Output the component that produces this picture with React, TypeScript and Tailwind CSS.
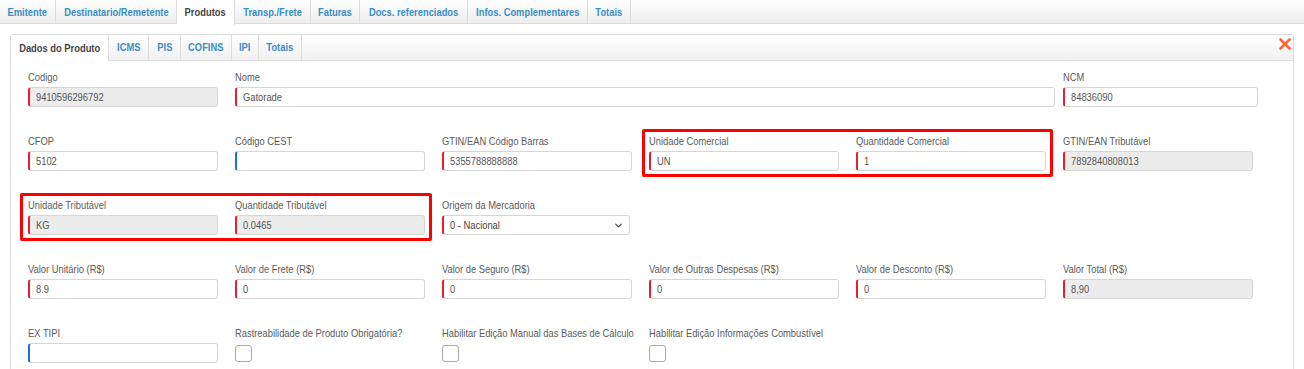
import { ChevronDown } from "lucide-react";

const font = { fontFamily: '"Liberation Sans", Arial, sans-serif' };

const topTabs = [
  { label: "Emitente", w: "w-[56px]" },
  { label: "Destinatario/Remetente", w: "w-[121px]" },
  { label: "Produtos", w: "w-[58px]", active: true },
  { label: "Transp./Frete", w: "w-[76px]" },
  { label: "Faturas", w: "w-[49px]" },
  { label: "Docs. referenciados", w: "w-[108px]" },
  { label: "Infos. Complementares", w: "w-[120px]" },
  { label: "Totais", w: "w-[43px]" },
];

const subTabs = [
  { label: "Dados do Produto", w: "w-[98px]", active: true },
  { label: "ICMS", w: "w-[40px]" },
  { label: "PIS", w: "w-[32px]" },
  { label: "COFINS", w: "w-[51px]" },
  { label: "IPI", w: "w-[27px]" },
  { label: "Totais", w: "w-[43px]" },
];

type Accent = "red" | "blue" | "none";

// o print original usa uma fonte estreita, entao comprimimos o texto
function Narrow({ children, center = false }: { children: React.ReactNode; center?: boolean }) {
  return (
    <span className={`inline-block whitespace-nowrap scale-x-[0.85] ${center ? "origin-center" : "origin-left"}`}>
      {children}
    </span>
  );
}

function Input({ value = "", gray = false, accent = "red", w = "w-[190px]" }: { value?: string; gray?: boolean; accent?: Accent; w?: string }) {
  return (
    <div
      className={`${w} h-[20px] flex items-center pl-[6px] rounded-[3px] border border-[#d6d6d6] border-l-2 text-[11px] text-[#555] ${
        gray ? "bg-[#ececec]" : "bg-white"
      } ${accent === "red" ? "border-l-[#e8202a]" : accent === "blue" ? "border-l-[#1e6fe0]" : ""}`}
    >
      <Narrow>{value}</Narrow>
    </div>
  );
}

function Field({ label, children, w = "w-[190px]" }: { label: string; children: React.ReactNode; w?: string }) {
  return (
    <div className={`${w} flex flex-col`}>
      <div className="h-[14px] leading-[14px] text-[11px] text-[#5a5a5a]">
        <Narrow>{label}</Narrow>
      </div>
      <div className="mt-[3px]">{children}</div>
    </div>
  );
}

function Checkbox() {
  return <div className="mt-[2px] w-[17px] h-[17px] rounded-[3px] border border-[#a9a9a9] bg-white" />;
}

function RedBox({ children, left = false }: { children: React.ReactNode; left?: boolean }) {
  return (
    <div
      className={`flex gap-[17px] border-[3px] border-[#ff0000] rounded-[2px] -mt-[5px] pt-[2px] -mb-[6px] pb-[3px] ${
        left ? "-ml-[8px] pl-[5px] -mr-[7px] pr-[4px]" : "-mx-[7px] px-[4px]"
      }`}
    >
      {children}
    </div>
  );
}

export default function App() {
  return (
    <div className="w-[1304px] h-[369px] overflow-hidden bg-white" style={font}>
      {/* abas principais */}
      <div className="flex h-[24px] border-b border-[#dcdcdc] bg-gradient-to-b from-white to-[#ededed]">
        {topTabs.map((t) => (
          <div
            key={t.label}
            className={`${t.w} h-[24px] flex items-center justify-center border-r border-[#dcdcdc] text-[11px] font-bold ${
              t.active ? "bg-white text-[#444] h-[25px]" : "text-[#3a8dc5]"
            }`}
          >
            <Narrow center>{t.label}</Narrow>
          </div>
        ))}
      </div>

      <div className="px-[10px] pt-[10px]">
        <div className="border border-[#dcdcdc] rounded-t-[3px] h-[400px]">
          {/* sub abas */}
          <div className="flex items-end h-[26px] border-b border-[#dcdcdc] bg-gradient-to-b from-white to-[#f0f0f0] relative">
            {subTabs.map((t) => (
              <div
                key={t.label}
                className={`${t.w} h-[25px] flex items-center justify-center border-r border-[#dcdcdc] text-[11px] font-bold ${
                  t.active ? "bg-white text-[#444] h-[26px] -mb-px" : "text-[#3a8dc5]"
                }`}
              >
                <Narrow center>{t.label}</Narrow>
              </div>
            ))}
            <svg className="absolute right-[2px] top-[3px]" width="12" height="12" viewBox="0 0 12 12">
              <path d="M1.5 1.5 L10.5 10.5 M10.5 1.5 L1.5 10.5" stroke="#ff6633" strokeWidth="2.6" strokeLinecap="round" />
            </svg>
          </div>

          <div className="pl-[17px] pt-[9px] flex flex-col gap-[27px]">
            <div className="flex">
              <Field label="Codigo">
                <Input value="9410596296792" gray />
              </Field>
              <Field label="Nome" w="w-[820px] ml-[17px]">
                <Input value="Gatorade" w="w-[820px]" />
              </Field>
              <Field label="NCM" w="w-[195px] ml-[8px]">
                <Input value="84836090" w="w-[195px]" />
              </Field>
            </div>

            <div className="flex gap-[17px]">
              <Field label="CFOP">
                <Input value="5102" />
              </Field>
              <Field label="Código CEST">
                <Input accent="blue" />
              </Field>
              <Field label="GTIN/EAN Código Barras">
                <Input value="5355788888888" />
              </Field>
              <RedBox>
                <Field label="Unidade Comercial">
                  <Input value="UN" />
                </Field>
                <Field label="Quantidade Comercial">
                  <Input value="1" />
                </Field>
              </RedBox>
              <Field label="GTIN/EAN Tributável">
                <Input value="7892840808013" gray />
              </Field>
            </div>

            <div className="flex gap-[17px]">
              <RedBox left>
                <Field label="Unidade Tributável">
                  <Input value="KG" gray />
                </Field>
                <Field label="Quantidade Tributável">
                  <Input value="0.0465" gray />
                </Field>
              </RedBox>
              <Field label="Origem da Mercadoria">
                <div className="w-[188px] h-[20px] flex items-center justify-between pl-[6px] pr-[5px] rounded-[3px] border border-[#d6d6d6] border-l-2 border-l-[#e8202a] text-[11px] text-[#444]">
                  <Narrow>0 - Nacional</Narrow>
                  <ChevronDown size={11} strokeWidth={2.5} className="text-[#444]" />
                </div>
              </Field>
            </div>

            <div className="flex gap-[17px]">
              <Field label="Valor Unitário (R$)">
                <Input value="8.9" />
              </Field>
              <Field label="Valor de Frete (R$)">
                <Input value="0" />
              </Field>
              <Field label="Valor de Seguro (R$)">
                <Input value="0" />
              </Field>
              <Field label="Valor de Outras Despesas (R$)">
                <Input value="0" />
              </Field>
              <Field label="Valor de Desconto (R$)">
                <Input value="0" />
              </Field>
              <Field label="Valor Total (R$)">
                <Input value="8,90" gray />
              </Field>
            </div>

            <div className="flex gap-[17px]">
              <Field label="EX TIPI">
                <Input accent="blue" />
              </Field>
              <Field label="Rastreabilidade de Produto Obrigatória?">
                <Checkbox />
              </Field>
              <Field label="Habilitar Edição Manual das Bases de Cálculo">
                <Checkbox />
              </Field>
              <Field label="Habilitar Edição Informações Combustível">
                <Checkbox />
              </Field>
            </div>
          </div>
        </div>
      </div>
    </div>
  );
}
